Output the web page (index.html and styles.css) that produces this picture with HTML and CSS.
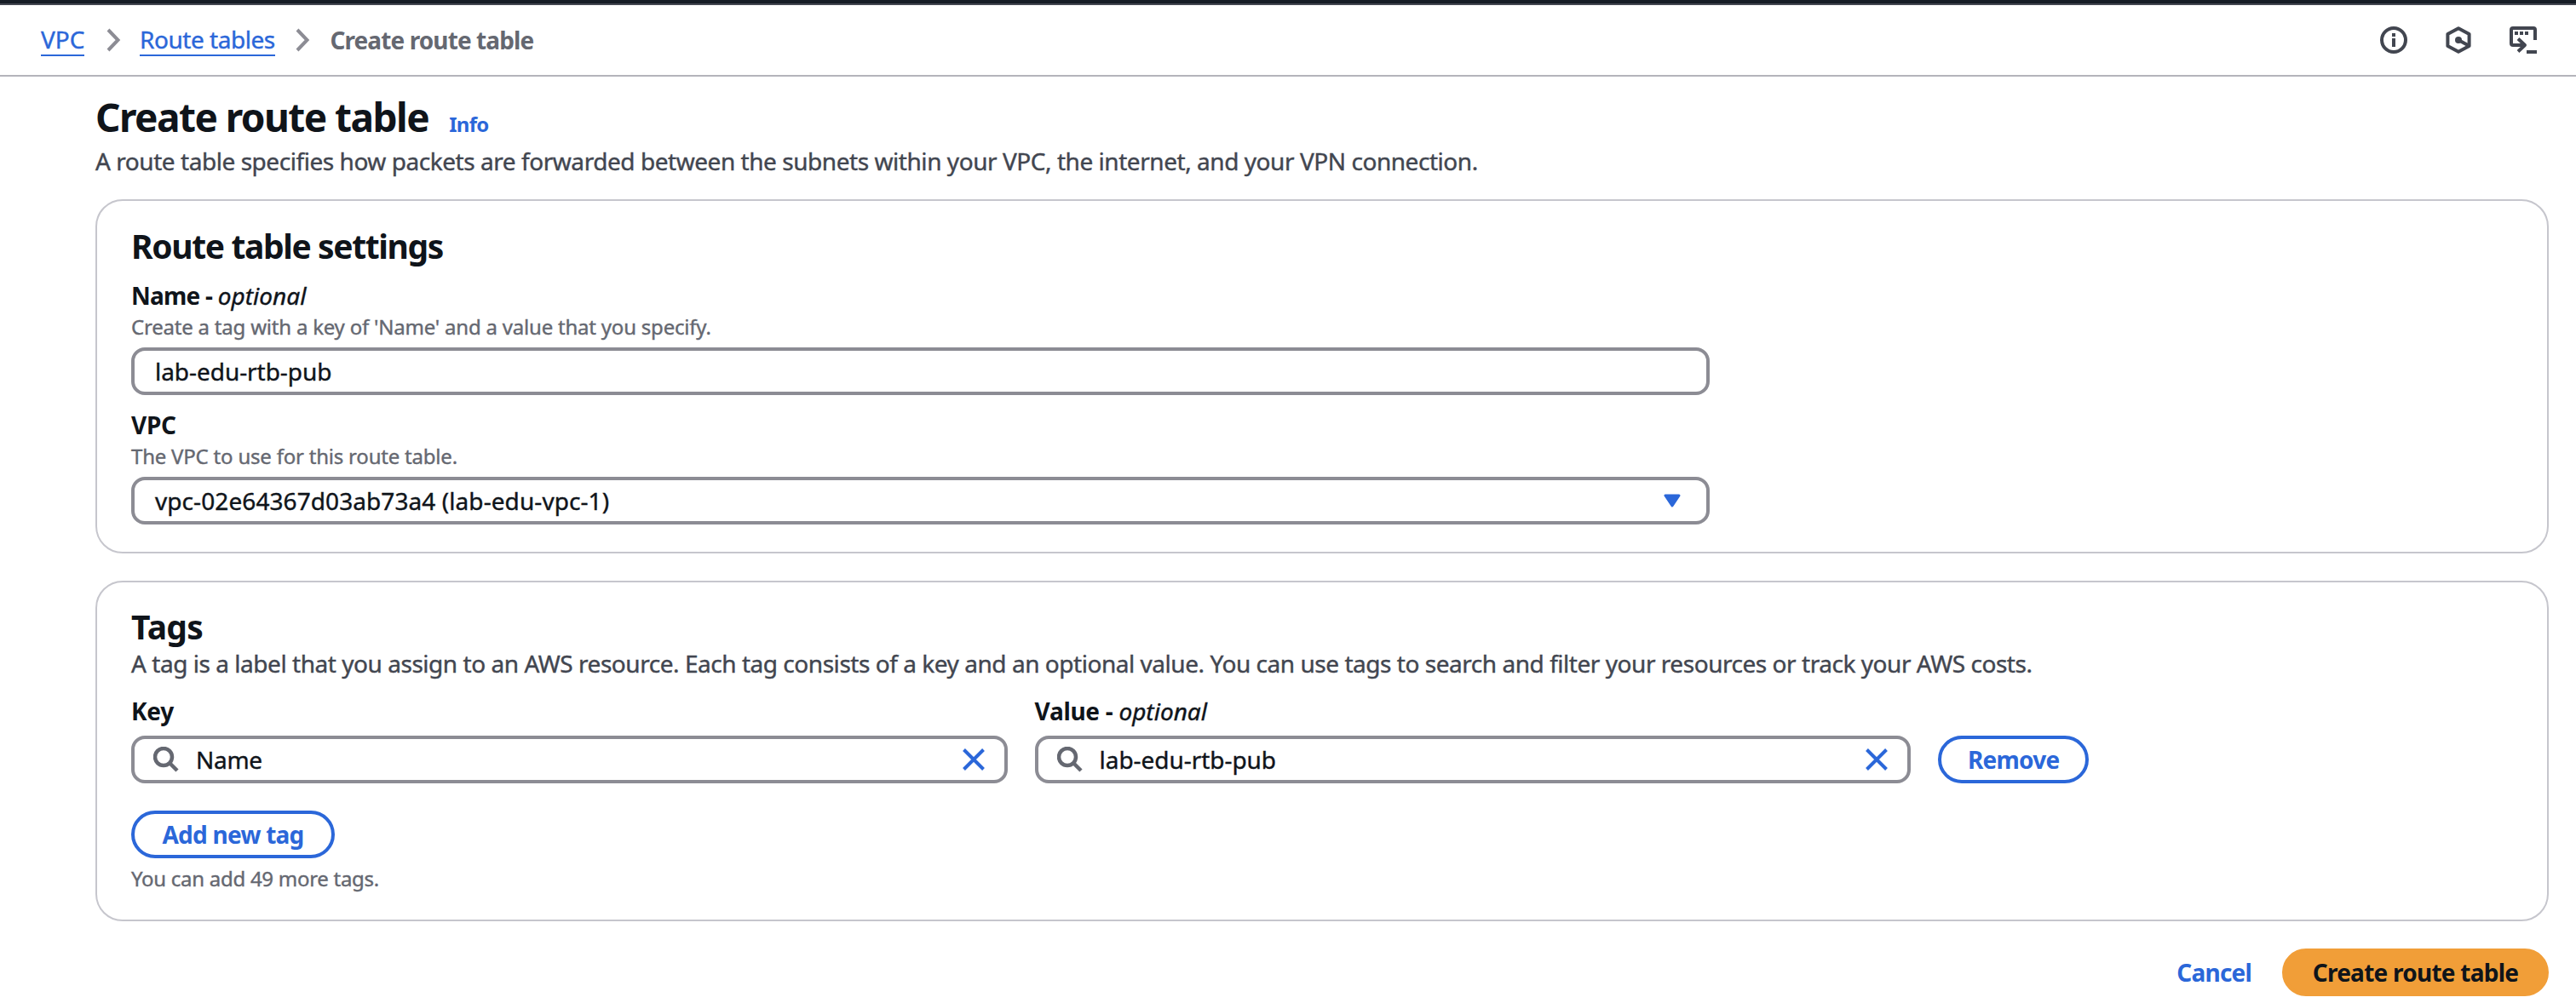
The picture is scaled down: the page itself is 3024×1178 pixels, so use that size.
FILE: index.html
```html
<!DOCTYPE html>
<html lang="en">
<head>
<meta charset="utf-8">
<title>Create route table</title>
<link rel="stylesheet" href="styles.css">
</head>
<body>
<header class="topbar">
  <nav class="crumbs">
    <a class="crumb" href="#">VPC</a>
    <svg class="chevron" viewBox="0 0 32 32"><path d="M11 4l11.500 12L11 28"/></svg>
    <a class="crumb crumb-tables" href="#">Route tables</a>
    <svg class="chevron" viewBox="0 0 32 32"><path d="M10 4l11.500 12L10 28"/></svg>
    <span class="crumb-current">Create route table</span>
  </nav>
  <div class="tools">
    <svg class="tool" viewBox="0 0 32 32"><circle cx="16" cy="16" r="14"/><path class="solid" d="M14 8h4v4h-4zM14 14h4v10h-4z"/></svg>
    <svg class="tool" viewBox="0 0 32 32"><path d="M16 2.200L28.600 9v14L16 29.800 3.400 23V9z"/><circle class="solid" cx="16" cy="16" r="4"/><path d="M16 16l11 6"/></svg>
    <svg class="tool" viewBox="0 0 32 32"><path d="M30 16V4q0-2-2-2H4Q2 2 2 4v16q0 2 2 2h13M10 14.500L18 22l-8 7.500"/><path class="solid" d="M6 6h4v4H6zM12 6h4v4h-4zM18 6h4v4h-4zM20 28h12v4H20z"/></svg>
  </div>
</header>
<main class="page">
  <div class="title-row"><h1>Create route table</h1><a class="info" href="#">Info</a></div>
  <p class="lead">A route table specifies how packets are forwarded between the subnets within your VPC, the internet, and your VPN connection.</p>

  <section class="card settings">
    <h2>Route table settings</h2>
    <div class="field">
      <div class="label"><b class="label-name">Name - </b><i>optional</i></div>
      <div class="hint">Create a tag with a key of 'Name' and a value that you specify.</div>
      <div class="control">lab-edu-rtb-pub</div>
    </div>
    <div class="field field-vpc">
      <div class="label"><b>VPC</b></div>
      <div class="hint">The VPC to use for this route table.</div>
      <div class="control select"><span>vpc-02e64367d03ab73a4 (lab-edu-vpc-1)</span>
        <svg class="caret" viewBox="0 0 20 16"><path d="M2 2h16l-8 12z"/></svg></div>
    </div>
  </section>

  <section class="card tags">
    <h2 class="tags-title">Tags</h2>
    <p class="tags-lead">A tag is a label that you assign to an AWS resource. Each tag consists of a key and an optional value. You can use tags to search and filter your resources or track your AWS costs.</p>
    <div class="tag-row">
      <div class="tag-col">
        <div class="label"><b>Key</b></div>
        <div class="control search">
          <svg class="lens" viewBox="0 0 30 30"><circle cx="12" cy="12" r="10"/><path d="M19 19l9 9"/></svg>
          <span class="search-text key-text">Name</span>
          <svg class="clear" viewBox="0 0 26 26"><path d="M1.500 1.500l23 23M24.500 1.500l-23 23"/></svg>
        </div>
      </div>
      <div class="tag-col">
        <div class="label"><b>Value - </b><i>optional</i></div>
        <div class="control search">
          <svg class="lens" viewBox="0 0 30 30"><circle cx="12" cy="12" r="10"/><path d="M19 19l9 9"/></svg>
          <span class="search-text">lab-edu-rtb-pub</span>
          <svg class="clear" viewBox="0 0 26 26"><path d="M1.500 1.500l23 23M24.500 1.500l-23 23"/></svg>
        </div>
      </div>
      <button class="btn btn-remove">Remove</button>
    </div>
    <button class="btn btn-add">Add new tag</button>
    <div class="hint quota">You can add 49 more tags.</div>
  </section>

  <footer class="actions">
    <a class="cancel" href="#">Cancel</a>
    <button class="btn btn-primary">Create route table</button>
  </footer>
</main>
</body>
</html>
```
FILE: styles.css
```css
* { box-sizing: border-box; }
body {
  margin: 0;
  background: #fff;
  color: #0f141a;
  font: 400 28px/40px "Noto Sans", "Open Sans", sans-serif;
  -webkit-text-stroke: 0.4px currentColor;
}
h1, h2, p { margin: 0; }
b, h1, h2 { font-weight: 700; }
b, h1, h2, .crumb-current, .info, .btn, .cancel { -webkit-text-stroke-width: 0; }
b { white-space: pre; letter-spacing: -0.3px; }
a { color: #2b67d9; text-decoration: none; }
svg { display: block; flex: none; fill: none; }

/* the gradient is the strip of dark global navigation above the breadcrumbs */
.topbar {
  display: flex;
  align-items: center;
  justify-content: space-between;
  height: 90px;
  padding: 6px 46px 0 48px;
  border-bottom: 2px solid #b4b4bb;
  background: linear-gradient(#161d26 4px, #424650 4px 6px, #fff 6px);
}
.crumbs { display: flex; align-items: center; }
.crumb { height: 38px; line-height: 36px; border-bottom: 2px solid #2b67d9; }
.crumb-tables { letter-spacing: -0.46px; }
.crumb-current { line-height: 38px; color: #656871; font-weight: 700; letter-spacing: -0.9px; }
.chevron { width: 32px; height: 32px; margin: 0 16.3px; stroke: #8c8c94; stroke-width: 4; }
.tools { display: flex; gap: 44px; }
.tool { width: 32px; height: 32px; stroke: #424650; stroke-width: 4; stroke-linejoin: round; }
.solid { fill: #424650; stroke: none; }

.page { padding: 17px 32px 0 112px; }
.title-row { display: flex; align-items: baseline; gap: 24px; }
h1 { font-size: 46px; line-height: 60px; letter-spacing: -1.55px; }
.info { font-size: 24px; line-height: 32px; font-weight: 700; letter-spacing: -0.7px; }
.lead { margin-top: 2px; color: #424650; letter-spacing: -0.45px; }

.card { border: 2px solid #c6c6cd; border-radius: 32px; padding: 29px 40px 32px; }
.settings { margin-top: 25px; }
.tags { margin-top: 32px; padding-top: 28px; }
h2 { font-size: 39px; line-height: 48px; letter-spacing: -1.38px; }
.tags-title { letter-spacing: -0.7px; }
.tags-lead { margin-top: -1px; color: #424650; letter-spacing: -0.46px; }

.field { width: 1853px; margin-top: 14px; }
.field-vpc { margin-top: 15px; }
.label { line-height: 40px; }
.label-name { letter-spacing: -0.75px; }
.hint { margin-top: 1px; font-size: 24px; line-height: 32px; color: #656871; letter-spacing: -0.21px; }
.control {
  display: flex;
  align-items: center;
  height: 56px;
  margin-top: 8px;
  padding: 0 24px;
  border: 4px solid #8c8c94;
  border-radius: 16px;
  letter-spacing: -0.05px;
}
.select { justify-content: space-between; padding-right: 30px; letter-spacing: 0.08px; }
.caret { width: 20px; height: 16px; fill: #2b67d9; stroke: #2b67d9; stroke-width: 3; stroke-linejoin: round; }

.tag-row { display: flex; align-items: flex-end; gap: 32px; margin-top: 16px; }
.tag-col { width: 1028.6px; }
.search { margin-top: 9px; padding: 0 23px 0 22px; }
.lens { width: 30px; height: 30px; stroke: #656871; stroke-width: 4.500; }
.search-text { flex: 1; padding-left: 20px; }
.key-text { letter-spacing: -0.3px; }
.clear { width: 26px; height: 26px; margin-top: -1px; stroke: #2b67d9; stroke-width: 4; }

.btn {
  display: block;
  height: 56px;
  padding: 0;
  border: 4px solid #2b67d9;
  border-radius: 28px;
  background: #fff;
  color: #2b67d9;
  font: inherit;
  font-weight: 700;
  line-height: 46px;
  letter-spacing: -0.75px;
}
.btn-remove { width: 177px; }
.btn-add { width: 239px; margin-top: 32px; }
.quota { margin-top: 8px; letter-spacing: -0.28px; }
.actions { display: flex; justify-content: flex-end; align-items: center; gap: 36px; margin-top: 32px; }
.cancel { font-weight: 700; letter-spacing: -0.8px; }
.btn-primary { width: 313px; border-color: #f19e38; background: #f19e38; color: #0f141a; }
```
